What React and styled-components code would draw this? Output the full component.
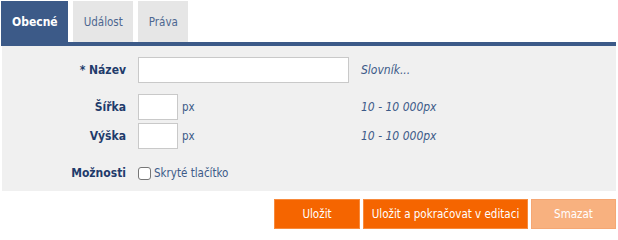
import React from "react";
import styled, { createGlobalStyle } from "styled-components";

const GlobalStyle = createGlobalStyle`
  body {
    margin: 0;
    background: #ffffff;
    font-family: "DejaVu Sans Condensed", "DejaVu Sans", sans-serif;
    font-size: 11.5px;
  }
`;

const Page = styled.div`
  width: 615px;
  padding: 1px 0 0 1px;
`;

const Tabs = styled.div`
  display: flex;
  gap: 5px;
  height: 41px;
`;

const Tab = styled.div`
  display: flex;
  align-items: center;
  padding: 0 10px 0 11px;
  background: ${(p) => (p.$active ? "#3c5a88" : "#e6e6e6")};
  color: ${(p) => (p.$active ? "#ffffff" : "#4d6690")};
  font-weight: ${(p) => (p.$active ? "bold" : "normal")};
  font-size: ${(p) => (p.$active ? "12px" : "11.5px")};
`;

const Bar = styled.div`
  height: 4px;
  background: #3c5a88;
`;

const Panel = styled.div`
  margin-left: 1px;
  background: #f0f0f0;
  padding: 11px 0 5px;
  display: flex;
  flex-direction: column;
`;

const Row = styled.div`
  display: grid;
  grid-template-columns: 124px 211px 1fr;
  column-gap: 12px;
  align-items: center;
  height: 26px;
  margin-top: ${(p) => p.$gap || 0}px;
`;

const Label = styled.label`
  text-align: right;
  font-weight: bold;
  font-size: 12px;
  color: #1f3b6b;
`;

const Field = styled.div`
  display: flex;
  align-items: center;
  gap: 4px;
  color: #3c5a88;
`;

const TextInput = styled.input`
  box-sizing: border-box;
  width: ${(p) => p.$w}px;
  height: 26px;
  margin: 0;
  border: 1px solid #c9c9c9;
  background: #ffffff;
  outline: none;
`;

const Help = styled.span`
  font-style: italic;
  font-size: 12px;
  color: #3c5a88;
`;

const Check = styled.input`
  appearance: none;
  box-sizing: border-box;
  width: 13px;
  height: 13px;
  margin: 0 -1px 0 0;
  border: 1px solid #777777;
  border-radius: 3px;
  background: #ffffff;
`;

const Actions = styled.div`
  display: flex;
  justify-content: flex-end;
  gap: 3px;
  margin-top: 8px;
`;

const Button = styled.button`
  box-sizing: border-box;
  height: 30px;
  width: ${(p) => p.$w}px;
  padding: 0;
  border: 1px solid ${(p) => (p.$muted ? "#f5a774" : "#f78a3c")};
  background: ${(p) => (p.$muted ? "#f8b17f" : "#f56500")};
  color: #ffffff;
  font-family: inherit;
  font-size: 11.5px;
`;

export default function App() {
  return (
    <Page>
      <GlobalStyle />
      <Tabs>
        <Tab $active>Obecné</Tab>
        <Tab>Událost</Tab>
        <Tab>Práva</Tab>
      </Tabs>
      <Bar />
      <Panel>
        <Row>
          <Label>* Název</Label>
          <Field>
            <TextInput $w={211} />
          </Field>
          <Help>Slovník...</Help>
        </Row>
        <Row $gap={11}>
          <Label>Šířka</Label>
          <Field>
            <TextInput $w={40} />
            px
          </Field>
          <Help>10 - 10 000px</Help>
        </Row>
        <Row $gap={3}>
          <Label>Výška</Label>
          <Field>
            <TextInput $w={40} />
            px
          </Field>
          <Help>10 - 10 000px</Help>
        </Row>
        <Row $gap={11}>
          <Label>Možnosti</Label>
          <Field>
            <Check type="checkbox" />
            Skryté tlačítko
          </Field>
          <span />
        </Row>
      </Panel>
      <Actions>
        <Button $w={86}>Uložit</Button>
        <Button $w={165}>Uložit a pokračovat v editaci</Button>
        <Button $w={85} $muted>Smazat</Button>
      </Actions>
    </Page>
  );
}
